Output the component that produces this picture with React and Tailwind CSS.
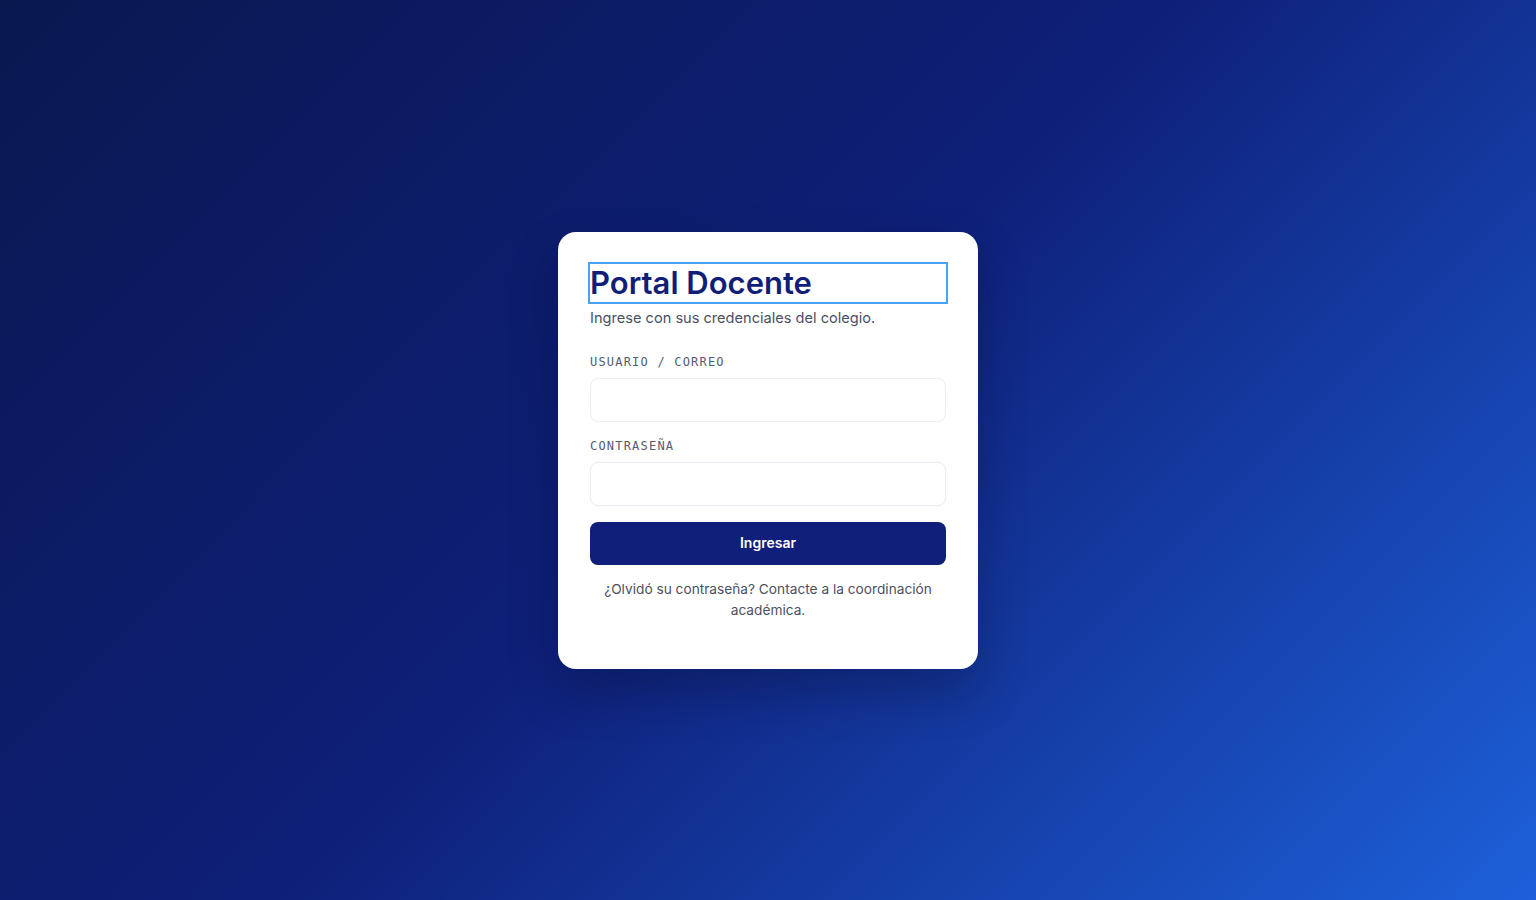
export default function App() {
  return (
    <div className="min-h-screen w-full flex items-center justify-center bg-[linear-gradient(135deg,#0a1850_0%,#0e1f78_48%,#1d60da_100%)] font-['Inter',sans-serif]">
      <div className="w-[420px] bg-white rounded-[18px] px-8 pt-8 pb-12 shadow-[0_24px_48px_rgba(5,10,40,0.3)]">
        <h1
          tabIndex={-1}
          className="text-[31px] leading-[38px] font-semibold text-[#111e78] outline-2 outline-solid outline-[#4aa3f8]"
        >
          Portal Docente
        </h1>
        <p className="mt-[5px] text-[14.6px] leading-[22px] text-[#4b5064]">
          Ingrese con sus credenciales del colegio.
        </p>

        <form className="mt-[25px]" onSubmit={(e) => e.preventDefault()}>
          <label className="block text-[12px] leading-4 tracking-[0.1em] text-[#555a70] font-['DejaVu_Sans_Mono',monospace]">
            USUARIO / CORREO
          </label>
          <input
            type="text"
            className="mt-2 block w-full h-11 rounded-lg border border-[#ebebf3] bg-white px-3 text-sm outline-none"
          />

          <label className="block mt-4 text-[12px] leading-4 tracking-[0.1em] text-[#555a70] font-['DejaVu_Sans_Mono',monospace]">
            CONTRASEÑA
          </label>
          <input
            type="password"
            className="mt-2 block w-full h-11 rounded-lg border border-[#ebebf3] bg-white px-3 text-sm outline-none"
          />

          <button
            type="submit"
            className="mt-4 w-full h-[43px] rounded-lg bg-[#0f1f7a] text-white text-sm font-semibold"
          >
            Ingresar
          </button>
        </form>

        <p className="mt-[14px] text-center text-[13.7px] leading-[21px] text-[#4b5064]">
          ¿Olvidó su contraseña? Contacte a la coordinación académica.
        </p>
      </div>
    </div>
  );
}
